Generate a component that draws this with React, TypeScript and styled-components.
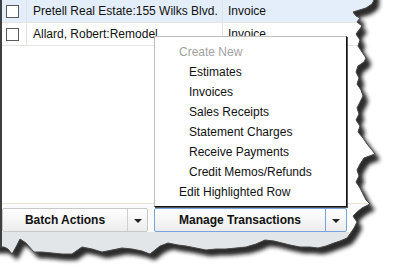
import * as React from 'react';
import styled, { createGlobalStyle } from 'styled-components';

const GlobalStyle = createGlobalStyle`
  html, body {
    margin: 0;
    padding: 0;
    background: #fff;
  }
  body {
    font-family: "Liberation Sans", Arial, sans-serif;
    font-size: 12px;
    color: #111;
  }
`;

type Txn = { name: string; type: string; selected?: boolean };

const rows: Txn[] = [
  { name: 'Pretell Real Estate:155 Wilks Blvd.', type: 'Invoice', selected: true },
  { name: 'Allard, Robert:Remodel', type: 'Invoice' },
];

const createItems = [
  'Estimates',
  'Invoices',
  'Sales Receipts',
  'Statement Charges',
  'Receive Payments',
  'Credit Memos/Refunds',
];

// torn paper outline, right side top to bottom then bottom side right to left
const rightEdge = [
  [374, 0], [372, 4], [366, 8], [353, 12], [356, 16], [360, 18], [357, 22], [362, 26],
  [359, 30], [356, 34], [360, 40], [358, 46], [362, 52], [366, 58], [364, 62], [358, 66],
  [356, 72], [359, 78], [357, 84], [361, 90], [363, 96], [360, 102], [357, 108], [359, 114],
  [356, 120], [360, 126], [358, 132], [363, 138], [367, 144], [372, 150], [375, 154],
  [364, 158], [360, 164], [357, 170], [359, 176], [356, 182], [360, 188], [363, 194],
  [366, 200], [370, 204], [362, 208], [357, 212], [353, 216], [357, 222], [354, 228],
  [350, 234], [347, 238],
];
const bottomEdge = [
  [340, 241], [334, 243], [326, 246], [318, 248], [310, 247], [300, 247], [290, 245],
  [282, 243], [274, 241], [265, 240], [256, 244], [246, 247], [236, 248], [226, 249],
  [216, 249], [206, 250], [196, 248], [186, 246], [178, 245], [168, 243], [160, 246],
  [150, 254], [142, 251], [132, 249], [122, 248], [112, 250], [102, 252], [92, 249],
  [82, 247], [72, 254], [62, 254], [52, 253], [42, 252], [34, 252], [26, 243], [20, 239],
  [16, 247], [12, 254], [8, 249], [4, 247], [0, 247],
];
const edgePoints = [...rightEdge, ...bottomEdge];
const paperPath =
  'M-20,-20 L374,-20 ' + edgePoints.map(([x, y]) => `L${x},${y}`).join(' ') + ' L-20,247 Z';
const edgeLine = 'M374,-2 ' + edgePoints.map(([x, y]) => `L${x},${y}`).join(' ') + ' L-2,247';
const fullRect = 'M0,0 H397 V280 H0 Z';

const Stage = styled.div`
  position: relative;
  width: 397px;
  height: 280px;
  overflow: hidden;
  background: #fff;
`;

const Panel = styled.div`
  display: flex;
  flex-direction: column;
  height: 280px;
  border-left: 2px solid #3f3f3f;
`;

const Row = styled.div<{ $selected?: boolean }>`
  display: flex;
  height: 22px;
  border-bottom: 1px solid #e4e4e0;
  background: ${p => (p.$selected ? '#e4eefa' : '#fff')};
`;

const CheckCell = styled.div`
  width: 25px;
  display: flex;
  align-items: center;
  padding-left: 4px;
  box-sizing: border-box;
  border-right: 1px solid #e2e2e0;
`;

const Checkbox = styled.span`
  width: 11px;
  height: 11px;
  border: 1px solid #5a5a5a;
  background: #fff;
`;

const Cell = styled.div<{ $width?: number }>`
  display: flex;
  align-items: center;
  box-sizing: border-box;
  padding-left: ${p => (p.$width ? 6 : 5)}px;
  width: ${p => (p.$width ? `${p.$width}px` : 'auto')};
  flex: ${p => (p.$width ? 'none' : '1')};
  border-right: ${p => (p.$width ? '1px solid #e2e2e0' : 'none')};
  white-space: nowrap;
  overflow: hidden;
  font-size: 12px;
  color: #111;
`;

const Blank = styled.div`
  flex: 0 0 157px;
`;

const Footer = styled.div`
  border-top: 1px solid #e8e5d3;
  padding-top: 4px;
  background: #fbfbfb;
`;

const ButtonBar = styled.div`
  display: flex;
  gap: 6px;
  height: 24px;
`;

const SplitButton = styled.div<{ $width: number; $active?: boolean }>`
  display: flex;
  width: ${p => p.$width}px;
  box-sizing: border-box;
  border: 1px solid ${p => (p.$active ? '#7aa2dc' : '#c8c8c8')};
  border-radius: 2px;
  background: linear-gradient(#ffffff, #ececec);
`;

const MainPart = styled.div<{ $active?: boolean }>`
  flex: 1;
  display: flex;
  align-items: center;
  justify-content: center;
  font-weight: bold;
  font-size: 12px;
  color: #111;
  border-right: 1px solid ${p => (p.$active ? '#7aa2dc' : '#cfcfcf')};
`;

const ArrowPart = styled.div<{ $width: number }>`
  width: ${p => p.$width}px;
  display: flex;
  align-items: center;
  justify-content: center;
`;

const Caret = styled.span`
  width: 0;
  height: 0;
  border-left: 4px solid transparent;
  border-right: 4px solid transparent;
  border-top: 4px solid #222;
  margin-top: 2px;
`;

const GrayBand = styled.div`
  flex: 1;
  background: #e2e6e8;
`;

const Menu = styled.div`
  position: absolute;
  left: 154px;
  top: 36px;
  width: 193px;
  height: 171px;
  box-sizing: border-box;
  background: #fff;
  border: 1px solid #bdbdbd;
  border-right-color: #111;
  border-bottom-color: #111;
  box-shadow: 1px 1px 0 #555;
  padding-top: 5px;
`;

const MenuItem = styled.div<{ $indent?: boolean; $muted?: boolean }>`
  height: 20px;
  line-height: 20px;
  font-size: 12px;
  padding-left: ${p => (p.$indent ? 34 : 24)}px;
  color: ${p => (p.$muted ? '#a2a2a2' : '#111')};
  white-space: nowrap;
`;

const Torn = styled.svg`
  position: absolute;
  left: 0;
  top: 0;
  width: 397px;
  height: 280px;
  pointer-events: none;
`;

function TornEdge() {
  return (
    <Torn viewBox="0 0 397 280">
      <defs>
        <filter id="tornBlur" x="-10%" y="-10%" width="120%" height="120%">
          <feGaussianBlur stdDeviation="2" />
        </filter>
        <clipPath id="outside">
          <path d={`${fullRect} ${paperPath}`} clipRule="evenodd" />
        </clipPath>
      </defs>
      <path d={`${fullRect} ${paperPath}`} fill="#fff" fillRule="evenodd" />
      <g clipPath="url(#outside)">
        <path d={paperPath} transform="translate(5 6)" fill="#1e1e1e" filter="url(#tornBlur)" />
        <path d={paperPath} transform="translate(3 4)" fill="#3a3a3a" opacity="0.6" filter="url(#tornBlur)" />
      </g>
      <path d={edgeLine} fill="none" stroke="#4a4a4a" strokeWidth="1" />
    </Torn>
  );
}

export default function App() {
  return (
    <Stage>
      <GlobalStyle />
      <Panel>
        {rows.map(r => (
          <Row key={r.name} $selected={r.selected}>
            <CheckCell>
              <Checkbox />
            </CheckCell>
            <Cell $width={196}>{r.name}</Cell>
            <Cell>{r.type}</Cell>
          </Row>
        ))}
        <Blank />
        <Footer>
          <ButtonBar>
            <SplitButton $width={146}>
              <MainPart>Batch Actions</MainPart>
              <ArrowPart $width={19}>
                <Caret />
              </ArrowPart>
            </SplitButton>
            <SplitButton $width={193} $active>
              <MainPart $active>Manage Transactions</MainPart>
              <ArrowPart $width={20}>
                <Caret />
              </ArrowPart>
            </SplitButton>
          </ButtonBar>
        </Footer>
        <GrayBand />
      </Panel>
      <Menu>
        <MenuItem $muted>Create New</MenuItem>
        {createItems.map(item => (
          <MenuItem key={item} $indent>
            {item}
          </MenuItem>
        ))}
        <MenuItem>Edit Highlighted Row</MenuItem>
      </Menu>
      <TornEdge />
    </Stage>
  );
}
